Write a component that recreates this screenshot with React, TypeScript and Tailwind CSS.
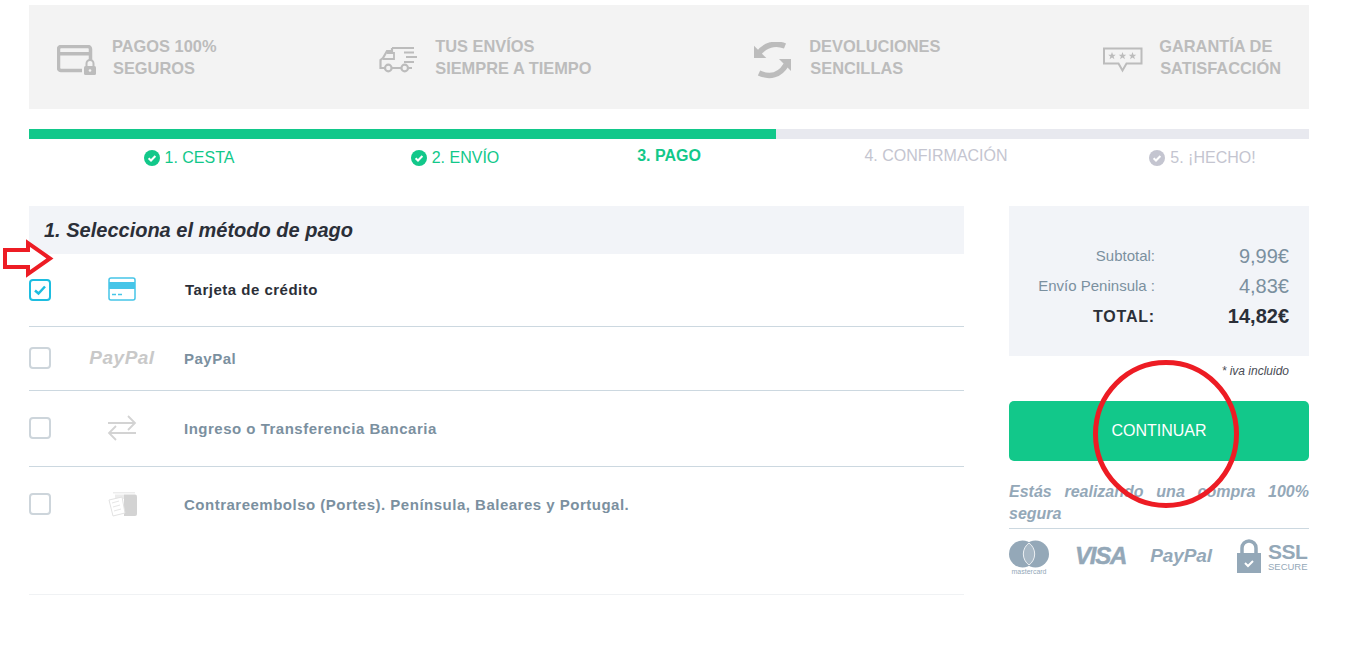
import React from "react";

const Check = ({ color }: { color: string }) => (
  <svg width="16" height="16" viewBox="0 0 16 16" className="shrink-0">
    <circle cx="8" cy="8" r="8" fill={color} />
    <path d="M4.600 8.200L7 10.500L11.400 6" fill="none" stroke="#fff" strokeWidth="2" />
  </svg>
);

const CardLock = () => (
  <svg width="40" height="30" viewBox="0 0 40 30" className="shrink-0 mt-[6px]">
    <path d="M25 25.500H4a2.500 2.500 0 0 1-2.500-2.500V4A2.500 2.500 0 0 1 4 1.500h27A2.500 2.500 0 0 1 33.500 4v11" fill="none" stroke="#bcbcbc" strokeWidth="3.500" />
    <rect x="2" y="7" width="31" height="3.500" fill="#bcbcbc" />
    <rect x="27" y="21" width="12" height="9" rx="1.500" fill="#bcbcbc" />
    <path d="M29.500 21v-2.500a3.500 3.500 0 0 1 7 0V21" fill="none" stroke="#bcbcbc" strokeWidth="2" />
    <circle cx="33" cy="25.500" r="1.300" fill="#f3f3f3" />
  </svg>
);

const Truck = () => (
  <svg width="40" height="30" viewBox="0 0 40 30" className="shrink-0 mt-[6px]" fill="none" stroke="#bcbcbc" strokeWidth="2.200">
    <path d="M13 3H35M25 7.500H35M27 12H38M25 17H35" />
    <path d="M13 3V6H8L4 13L1.500 15V23H6" />
    <path d="M8 8H15V14H4" strokeWidth="1.800" />
    <path d="M12.500 23H22M29 23H33" />
    <circle cx="9.300" cy="23" r="3.300" />
    <circle cx="25.700" cy="23" r="3.300" />
  </svg>
);

const Returns = () => (
  <svg width="38" height="38" viewBox="0 0 38 38" className="shrink-0 mt-[8px]">
    <path d="M0 3.700V16H12.300z" fill="#bcbcbc" />
    <path d="M5 11C11 3 21 0 31 4" fill="none" stroke="#bcbcbc" strokeWidth="5.500" />
    <path d="M37 17V29L25 17z" fill="#bcbcbc" />
    <path d="M32 23C26 33 16 36 5 31" fill="none" stroke="#bcbcbc" strokeWidth="5.500" />
  </svg>
);

const Star = ({ x }: { x: number }) => (
  <path transform={`translate(${x} 9)`} d="M0-4L1-1.300L3.800-1.200L1.600.5L2.400 3.200L0 1.600L-2.400 3.200L-1.600.5L-3.800-1.200L-1-1.300z" fill="#bcbcbc" />
);

const Stars = () => (
  <svg width="40" height="26" viewBox="0 0 40 26" className="shrink-0 mt-[6px]">
    <path d="M1 1.500H38.500V16.500H23.500L19.500 23.500L15.500 16.500H1z" fill="none" stroke="#bcbcbc" strokeWidth="2" />
    <Star x={9} />
    <Star x={19.500} />
    <Star x={29.500} />
  </svg>
);

const Benefit = ({ icon, a, b, gap, shift }: { icon: React.ReactNode; a: string; b: string; gap: string; shift?: boolean }) => (
  <div className={`flex items-center ${gap}`}>
    {icon}
    <div className="font-bold text-[16.400px] leading-[22px] text-[#bcbcbc]">
      <div>{a}</div>
      <div className={shift ? "pl-px" : ""}>{b}</div>
    </div>
  </div>
);

const Box = ({ on }: { on?: boolean }) => (
  <div className={`w-[22px] h-[22px] shrink-0 rounded-[4px] border-2 flex items-center justify-center ${on ? "border-[#1dbde0]" : "border-[#cdd5db]"}`}>
    {on && (
      <svg width="14" height="12" viewBox="0 0 14 12">
        <path d="M2 6.500L5.500 9.500L12 2.500" fill="none" stroke="#1dbde0" strokeWidth="2.500" />
      </svg>
    )}
  </div>
);

const CardBlue = () => (
  <svg width="28" height="24" viewBox="0 0 28 24" className="-mt-[2px]">
    <rect x="1" y="1" width="26" height="22" rx="2" fill="none" stroke="#46c5e8" strokeWidth="1.500" />
    <rect x="1" y="5" width="26" height="7" fill="#46c5e8" />
    <path d="M4 17.500h4M10 17.500h4" stroke="#46c5e8" strokeWidth="1.500" />
  </svg>
);

const Arrows = () => (
  <svg width="30" height="28" viewBox="0 0 30 28" fill="none" stroke="#d3d3d3" strokeWidth="1.800">
    <path d="M1 9h27M21 2l7 7-7 7" />
    <path d="M29 19H2M9 12l-7 7 7 7" />
  </svg>
);

const Bills = () => (
  <svg width="30" height="26" viewBox="0 0 30 26">
    <path d="M6 1h22v1.500H6z" fill="#ececec" />
    <path d="M17 3.500h11a2 2 0 0 1 2 2V23a2 2 0 0 1-2 2H17z" fill="#d3d3d3" />
    <path d="M8 3.500h9V8H8z" fill="#ececec" />
    <path d="M2 9l13-3 3 16-12 3z" fill="#fff" stroke="#e2e2e2" strokeWidth="1" />
    <path d="M5 12l7-2M6 16l7-2M7 20l7-2" stroke="#e6e6e6" strokeWidth="1" />
  </svg>
);

const Method = ({ on, icon, label, h, top, border }: { on?: boolean; icon: React.ReactNode; label: string; h: string; top: string; border: string }) => (
  <div className={`flex items-start border-b ${h} ${top} ${border}`}>
    <Box on={on} />
    <div className="w-[133px] shrink-0 flex justify-center items-center h-[22px] pl-[9px]">{icon}</div>
    <span className={`text-[15px] leading-[22px] font-bold tracking-[0.5px] ${on ? "text-[#2b2f38] ml-px" : "text-[#7b909f] mt-px"}`}>{label}</span>
  </div>
);

const Row = ({ label, value, bold }: { label: string; value: string; bold?: boolean }) => (
  <div className="flex items-center h-[30px]">
    <div className={`w-[146px] pt-px text-right ${bold ? "font-bold text-[16px] text-[#2b2f38] tracking-[0.8px]" : "text-[15px] text-[#7b909f]"}`}>{label}</div>
    <div className={`flex-1 pr-[20px] text-right text-[20px] ${bold ? "font-bold text-[#2b2f38]" : "text-[#7b909f]"}`}>{value}</div>
  </div>
);

const stepBase = "flex justify-center items-center gap-[5px] shrink-0";

export default function App() {
  return (
    <div className="relative w-[1371px] h-[648px] overflow-hidden bg-white font-['Liberation_Sans',Arial,sans-serif] pt-[5px] pl-[29px]">
      <div className="w-[1280px]">
        <div className="h-[104px] bg-[#f3f3f3] px-[28px] flex items-center justify-between">
          <Benefit icon={<CardLock />} a="PAGOS 100%" b="SEGUROS" gap="gap-[15px]" shift />
          <Benefit icon={<Truck />} a="TUS ENVÍOS" b="SIEMPRE A TIEMPO" gap="gap-[16px]" />
          <Benefit icon={<Returns />} a="DEVOLUCIONES" b="SENCILLAS" gap="gap-[17px]" shift />
          <Benefit icon={<Stars />} a="GARANTÍA DE" b="SATISFACCIÓN" gap="gap-[16px]" shift />
        </div>

        <div className="mt-[20px] h-[10px] bg-[#e8e9ef]">
          <div className="h-full w-[747px] bg-[#12c88a]" />
        </div>

        <div className="flex h-[67px] ml-[27px] text-[16px]">
          <div className={`${stepBase} w-[266px] h-[38px] text-[#12c88a]`}><Check color="#12c88a" />1. CESTA</div>
          <div className={`${stepBase} w-[266px] h-[38px] text-[#12c88a]`}><Check color="#12c88a" />2. ENVÍO</div>
          <div className={`${stepBase} w-[162px] h-[34px] text-[#12c88a] font-bold`}>3. PAGO</div>
          <div className={`${stepBase} w-[372px] h-[34px] text-[#c4c5d0]`}>4. CONFIRMACIÓN</div>
          <div className={`${stepBase} w-[161px] h-[38px] text-[#c4c5d0]`}><Check color="#c4c5d0" />5. ¡HECHO!</div>
        </div>

        <div className="flex justify-between items-start">
          <div className="w-[935px]">
            <div className="h-[48px] bg-[#f2f4f8] flex items-center pl-[15px] text-[20px] italic font-bold text-[#2b2f38]">1. Selecciona el método de pago</div>
            <Method on icon={<CardBlue />} label="Tarjeta de crédito" h="h-[73px]" top="pt-[25px]" border="border-[#ccd8e0]" />
            <Method icon={<span className="italic font-bold text-[19px] text-[#c9c9c9] tracking-[0.5px]">PayPal</span>} label="PayPal" h="h-[64px]" top="pt-[20px]" border="border-[#ccd8e0]" />
            <Method icon={<Arrows />} label="Ingreso o Transferencia Bancaria" h="h-[76px]" top="pt-[26px]" border="border-[#ccd8e0]" />
            <Method icon={<Bills />} label="Contrareembolso (Portes). Península, Baleares y Portugal." h="h-[128px]" top="pt-[26px]" border="border-[#f0f2f4]" />
          </div>

          <div className="w-[300px]">
            <div className="h-[150px] bg-[#f2f4f8] pt-[35px]">
              <Row label="Subtotal:" value="9,99€" />
              <Row label="Envío Peninsula :" value="4,83€" />
              <Row label="TOTAL:" value="14,82€" bold />
            </div>
            <div className="h-[45px] pt-[6px] pr-[20px] text-right text-[12px] italic text-[#4a4d55]">* iva incluido</div>
            <div className="h-[60px] rounded-[5px] bg-[#12c88a] text-white text-[16px] flex items-center justify-center">CONTINUAR</div>
            <div className="mt-[20px] text-[16px] leading-[22px] italic font-bold text-[#94a8b8] text-justify pb-[3px] border-b border-[#ccd8e0]">Estás realizando una compra 100% segura</div>
            <div className="mt-[11px] flex items-start">
              <div className="flex flex-col items-center w-[40px]">
                <svg width="40" height="28" viewBox="0 0 40 28">
                  <circle cx="13.500" cy="14" r="13.500" fill="#94a8b8" />
                  <circle cx="26.500" cy="14" r="13.500" fill="#94a8b8" />
                  <path d="M20 3a13.500 13.500 0 0 1 0 22a13.500 13.500 0 0 1 0-22z" fill="#a8b8c5" stroke="#fff" strokeWidth="0.800" />
                </svg>
                <span className="text-[7px] leading-[7px] text-[#94a8b8]">mastercard</span>
              </div>
              <span className="mt-[2px] ml-[26px] italic font-bold text-[24px] leading-[28px] text-[#94a8b8] tracking-[-1.200px] [-webkit-text-stroke:0.500px_#94a8b8]">VISA</span>
              <span className="mt-[2px] ml-[24px] italic font-bold text-[19px] leading-[28px] text-[#94a8b8] tracking-[-0.100px]">PayPal</span>
              <div className="ml-[25px] flex items-start gap-[7px]">
                <svg width="24" height="34" viewBox="0 0 24 34" className="-mt-px">
                  <path d="M5 15V9a7 7 0 0 1 14 0v6" fill="none" stroke="#94a8b8" strokeWidth="3.500" />
                  <rect x="0" y="14" width="24" height="20" fill="#94a8b8" />
                  <path d="M8 24l3 3 5-5" fill="none" stroke="#fff" strokeWidth="2" />
                </svg>
                <div className="flex flex-col items-start">
                  <span className="font-bold text-[21px] leading-[20px] text-[#94a8b8] mt-[2px] tracking-[-0.500px]">SSL</span>
                  <span className="text-[9.500px] leading-[10px] text-[#94a8b8]">SECURE</span>
                </div>
              </div>
            </div>
          </div>
        </div>
      </div>

      <svg width="52" height="40" viewBox="0 0 52 40" className="absolute left-[2px] top-[239px]">
        <path d="M3 11H26V4L48 19.500L26 35V28H3z" fill="#fff" stroke="#ed1c24" strokeWidth="4" />
      </svg>
      <svg width="150" height="150" viewBox="0 0 150 150" className="absolute left-[1091px] top-[359px]">
        <ellipse cx="75" cy="75" rx="70.500" ry="71.500" fill="none" stroke="#ed1c24" strokeWidth="5" />
      </svg>
    </div>
  );
}
